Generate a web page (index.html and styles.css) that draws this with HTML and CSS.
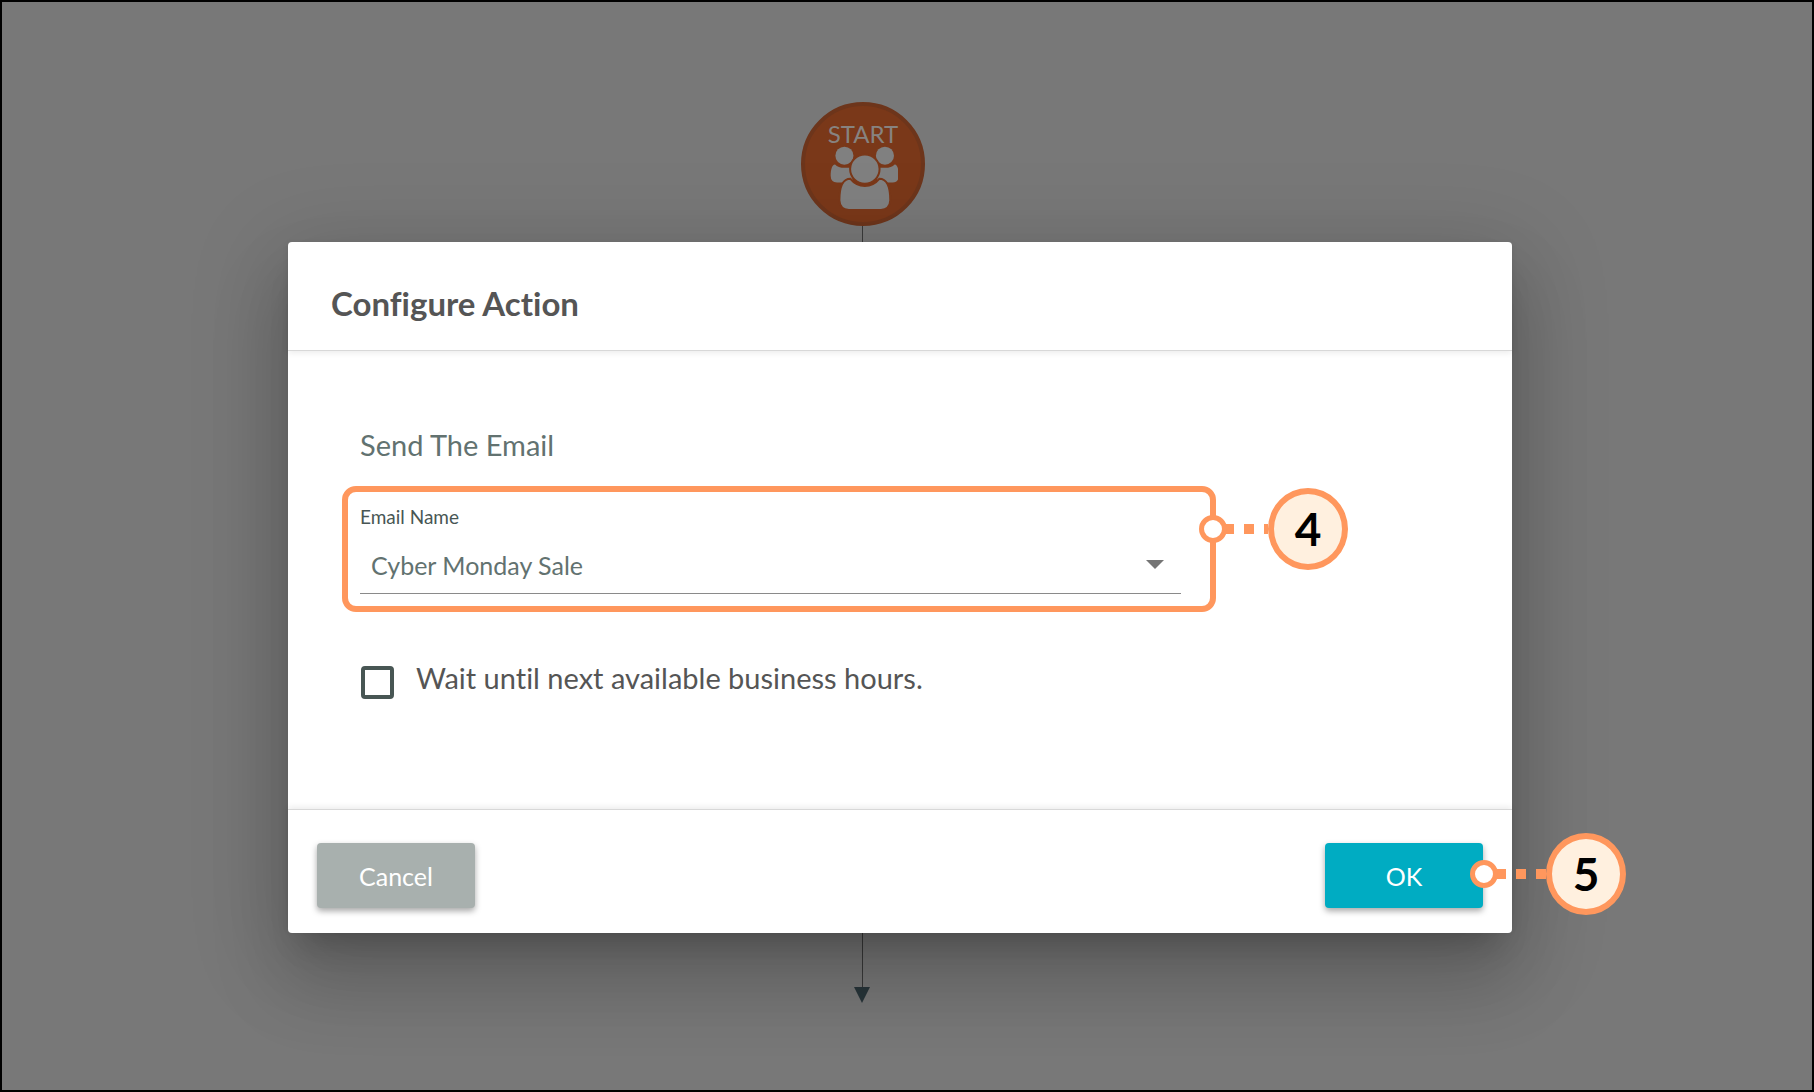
FILE: index.html
```
<!DOCTYPE html>
<html lang="en">
<head>
    <meta charset="UTF-8">
    <meta name="viewport" content="width=device-width, initial-scale=1.0">
    <title>Configure Action</title>
    <link rel="stylesheet" href="styles.css">
</head>
<body>
    <!-- Workflow canvas behind the dialog -->
    <div class="canvas">
        <div class="flow-line"></div>
        <svg class="flow-arrow" viewBox="0 0 16 16"><path d="M0 0h16L8 16z" fill="#28353a"/></svg>
        <div class="start-node">
            <span>START</span>
            <svg class="people" viewBox="146 199 206 191">
                <g fill="#808080">
                    <circle cx="192" cy="228" r="27"/>
                    <circle cx="313" cy="228" r="27"/>
                    <path d="M164 254C170 261 180 264 192 264H216V308H170Q151 307 151 288C151 270 155 254 164 254Z"/>
                    <path d="M342 254C336 261 326 264 314 264H290V308H336Q354 307 354 288C354 270 351 254 342 254Z"/>
                </g>
                <g fill="#808080" stroke="#7a3819" stroke-width="6">
                    <path d="M210 297C222 312 236 318 253 318S284 312 296 297C320 297 329 325 329 361Q328 388 301 390H205Q178 388 177 361C177 325 186 297 210 297Z"/>
                    <circle cx="253" cy="268" r="44"/>
                </g>
            </svg>
        </div>
    </div>

    <div class="dialog" role="dialog" aria-labelledby="dialogTitle">
        <div class="dialog-header">
            <h1 id="dialogTitle">Configure Action</h1>
        </div>

        <div class="dialog-body">
            <h2>Send The Email</h2>

            <div class="field">
                <label for="emailName">Email Name</label>
                <div class="select-wrap">
                    <select id="emailName">
                        <option>Cyber Monday Sale</option>
                    </select>
                    <svg class="caret" viewBox="0 0 18 9"><path d="M0 0h18L9 9z" fill="#757575"/></svg>
                </div>
                <div class="callout callout-field">
                    <span class="dot"></span>
                    <span class="dashes"></span>
                    <span class="badge">4</span>
                </div>
            </div>

            <div class="check-row">
                <input type="checkbox" id="waitHours">
                <label for="waitHours">Wait until next available business hours.</label>
            </div>
        </div>

        <div class="dialog-footer">
            <button type="button" class="btn btn-cancel">Cancel</button>
            <div class="ok-wrap">
                <button type="button" class="btn btn-ok">OK</button>
                <div class="callout callout-ok">
                    <span class="dot"></span>
                    <span class="dashes"></span>
                    <span class="badge">5</span>
                </div>
            </div>
        </div>
    </div>
</body>
</html>
```
FILE: styles.css
```
* {
    box-sizing: border-box;
}
body {
    font-family: Lato, sans-serif;
    font-variant-ligatures: none;
    background-color: #787878;
    margin: 0;
    min-height: 100vh;
    padding: 240px 300px 0 286px;
    border: 2px solid #000;
    position: relative;
    overflow: hidden;
}

/* canvas */
.canvas {
    position: absolute;
    top: 0;
    left: 0;
    width: 100%;
    height: 100%;
}
.start-node {
    position: absolute;
    top: 100px;
    left: 799px;
    width: 124px;
    height: 124px;
    border: 4px solid #6d351b;
    border-radius: 50%;
    background-color: #7a3819;
    color: #878380;
    font-size: 24px;
    line-height: 24px;
    padding-top: 16px;
    display: flex;
    flex-direction: column;
    align-items: center;
}
.people {
    width: 69px;
    height: 64px;
}
.flow-line {
    position: absolute;
    top: 220px;
    left: 860px;
    width: 1px;
    height: 768px;
    background-color: #3a3a3a;
}
.flow-arrow {
    position: absolute;
    top: 985px;
    left: 852px;
    width: 16px;
    height: 16px;
}

/* dialog */
.dialog {
    position: relative;
    background-color: #fff;
    border-radius: 4px;
    box-shadow: 0 22px 30px -14px rgba(0, 0, 0, 0.2),
        0 48px 76px 6px rgba(0, 0, 0, 0.14),
        0 18px 92px 16px rgba(0, 0, 0, 0.12);
}
.dialog-header {
    padding: 41px 43px 27px;
    border-bottom: 1px solid #d8d8d8;
    box-shadow: 0 2px 6px rgba(0, 0, 0, 0.08);
}
h1 {
    margin: 0;
    font-size: 33px;
    line-height: 40px;
    color: #555;
}
.dialog-body {
    padding: 76px 54px 110px;
}
h2 {
    margin: 0 18px 23px;
    font-size: 29px;
    font-weight: 400;
    line-height: 36px;
    color: #627270;
}
.field {
    position: relative;
    width: calc(100% - 242px);
    padding: 13px 29px 12px 12px;
    border: 6px solid #ff975d;
    border-radius: 14px;
}
.field label {
    display: block;
    font-size: 19px;
    line-height: 24px;
    color: #485654;
}
.select-wrap {
    display: flex;
    align-items: center;
    border-bottom: 1px solid #8a8a8a;
    padding: 11px 17px 4px 11px;
    height: 65px;
}
select {
    flex: 1;
    appearance: none;
    border: none;
    background: none;
    padding: 0;
    font-family: inherit;
    font-size: 25px;
    line-height: 32px;
    color: #627270;
}
.caret {
    width: 18px;
    height: 9px;
}
.check-row {
    display: flex;
    align-items: flex-start;
    gap: 22px;
    margin: 48px 18px 0 19px;
}
.check-row input {
    appearance: none;
    width: 33px;
    height: 33px;
    margin: 6px 0 0;
    border: 4px solid #485654;
    border-radius: 4px;
}
.check-row label {
    font-size: 29px;
    line-height: 36px;
    color: #555;
}
.dialog-footer {
    display: flex;
    justify-content: space-between;
    padding: 33px 29px 25px;
    border-top: 1px solid #d8d8d8;
    box-shadow: 0 -2px 6px rgba(0, 0, 0, 0.08);
}
.btn {
    display: block;
    width: 158px;
    height: 65px;
    border: none;
    border-radius: 4px;
    font-family: inherit;
    font-size: 25px;
    color: #fff;
    box-shadow: 0 3px 6px rgba(0, 0, 0, 0.35);
    cursor: pointer;
}
.btn-cancel {
    background-color: #a8b0ae;
}
.btn-ok {
    background-color: #00acc2;
}
.ok-wrap {
    position: relative;
}

/* numbered callouts */
.callout {
    position: absolute;
    display: flex;
    align-items: center;
}
.callout-field {
    top: -4px;
    right: -138px;
}
.callout-ok {
    top: -10px;
    right: -143px;
}
.dot {
    position: relative;
    z-index: 1;
    width: 28px;
    height: 28px;
    border: 5px solid #ff975d;
    border-radius: 50%;
    background-color: #fff;
}
.dashes {
    width: 50px;
    height: 10px;
    margin-left: -2px;
    background: repeating-linear-gradient(90deg, #ff975d 0 10px, transparent 10px 20px);
}
.callout-field .dashes {
    width: 44px;
    margin-left: -3px;
}
.badge {
    width: 80px;
    height: 82px;
    border: 6px solid #ff975d;
    border-radius: 50%;
    background-color: #fff0df;
    font-size: 46px;
    font-weight: 700;
    line-height: 70px;
    text-align: center;
    color: #000;
}
```
